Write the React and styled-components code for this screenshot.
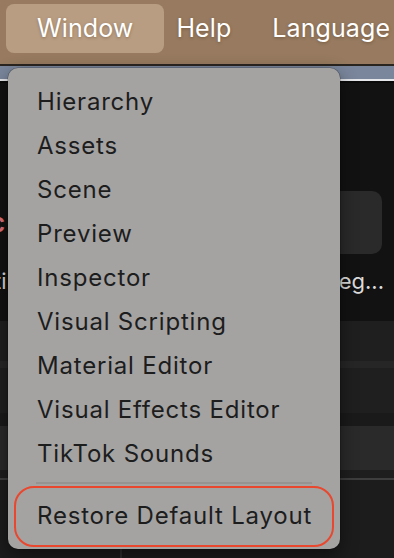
import React from 'react'
import styled, { createGlobalStyle } from 'styled-components'

const GlobalStyle = createGlobalStyle`
  html, body {
    margin: 0;
    padding: 0;
    background: #121212;
    width: 394px;
    height: 558px;
    overflow: hidden;
  }
  body {
    font-family: "Inter", "Noto Sans", sans-serif;
  }
`

const Screen = styled.div`
  position: relative;
  width: 394px;
  height: 558px;
  overflow: hidden;
  display: flex;
  flex-direction: column;
`

const MenuBar = styled.div`
  height: 66px;
  flex: none;
  background: #977a5f;
  border-bottom: 2px solid #2b2520;
  display: flex;
  align-items: center;
  padding: 0 6px;
  box-sizing: border-box;
`

const BarItem = styled.div`
  height: 49px;
  margin-top: -8px;
  margin-left: ${p => p.$gap || 0}px;
  display: flex;
  align-items: center;
  padding: ${p => (p.$active ? '0 31px' : '0 12px')};
  border-radius: 8px;
  background: ${p => (p.$active ? '#b99d82' : 'transparent')};
  color: #ffffff;
  font-size: 25px;
  font-weight: 400;
  letter-spacing: 0.1px;
  text-shadow: 0 1px 3px rgba(60, 40, 20, 0.35);
  white-space: nowrap;
`

const TabStrip = styled.div`
  height: 13px;
  flex: none;
  background: #7a869c;
  border-bottom: 2px solid #e4e6ea;
`

const Workspace = styled.div`
  flex: 1;
  background: #121212;
  display: flex;
  flex-direction: column;
  border-top: 2px solid #0a0a0a;
`

const Band = styled.div`
  height: ${p => p.$h}px;
  background: ${p => p.$bg};
  flex: none;
`

const TileRow = styled.div`
  height: 64px;
  display: flex;
  align-items: center;
  justify-content: space-between;
  padding: 0 12px 0 0;
  margin-top: 107px;
`

const LeftMark = styled.span`
  color: #e0707a;
  font-size: 26px;
  font-weight: 600;
  margin-left: -10px;
`

const Tile = styled.div`
  width: 110px;
  height: 63px;
  border-radius: 10px;
  background: #2a2a2a;
`

const LabelRow = styled.div`
  height: 36px;
  margin-top: 9px;
  margin-bottom: 22px;
  display: flex;
  align-items: center;
  justify-content: space-between;
  color: #dcdcdc;
  font-size: 22px;
  padding-right: 10px;
  margin-left: -6px;
`

const BottomRow = styled.div`
  flex: 1;
  display: grid;
  grid-template-columns: 120px 2px 1fr;
  border-top: 2px solid #3e3e3e;
  background: #1c1c1c;
`

const Divider = styled.div`
  background: #2e2e2e;
`

const Menu = styled.div`
  position: absolute;
  left: 8px;
  top: 68px;
  width: 332px;
  height: 481px;
  box-sizing: border-box;
  background: #a4a3a2;
  border-radius: 10px;
  box-shadow: 0 6px 18px rgba(0, 0, 0, 0.45), 0 0 0 0.5px rgba(0, 0, 0, 0.3);
  padding-top: 11px;
  display: flex;
  flex-direction: column;
`

const Item = styled.div`
  height: 44px;
  display: flex;
  align-items: center;
  padding-left: 29px;
  color: #1d1d1d;
  font-size: 24px;
  font-weight: 400;
  letter-spacing: 0.8px;
  white-space: nowrap;
`

const Separator = styled.div`
  height: 2px;
  margin: 7px 28px 2px 28px;
  background: #959493;
`

const Highlighted = styled(Item)`
  height: 61px;
  margin: 0 6px;
  padding-left: 21px;
  box-sizing: border-box;
  border: 2.5px solid #e9472e;
  border-radius: 20px;
  padding-bottom: 2px;
`

const items = [
  'Hierarchy',
  'Assets',
  'Scene',
  'Preview',
  'Inspector',
  'Visual Scripting',
  'Material Editor',
  'Visual Effects Editor',
  'TikTok Sounds',
]

export default function App() {
  return (
    <Screen>
      <GlobalStyle />
      <MenuBar>
        <BarItem $active>Window</BarItem>
        <BarItem>Help</BarItem>
        <BarItem $gap={17}>Language</BarItem>
      </MenuBar>
      <TabStrip />
      <Workspace>
        <TileRow>
          <LeftMark>c</LeftMark>
          <Tile />
        </TileRow>
        <LabelRow>
          <span>ti</span>
          <span>Seg...</span>
        </LabelRow>
        <Band $h={40} $bg="#1f1f1f" />
        <Band $h={7} $bg="#262626" />
        <Band $h={45} $bg="#1f1f1f" />
        <Band $h={13} $bg="#1a1a1a" />
        <Band $h={44} $bg="#2a2a2a" />
        <Band $h={8} $bg="#1e1e1e" />
        <BottomRow>
          <div />
          <Divider />
          <div />
        </BottomRow>
      </Workspace>

      <Menu>
        {items.map(name => (
          <Item key={name}>{name}</Item>
        ))}
        <Separator />
        <Highlighted>Restore Default Layout</Highlighted>
      </Menu>
    </Screen>
  )
}
